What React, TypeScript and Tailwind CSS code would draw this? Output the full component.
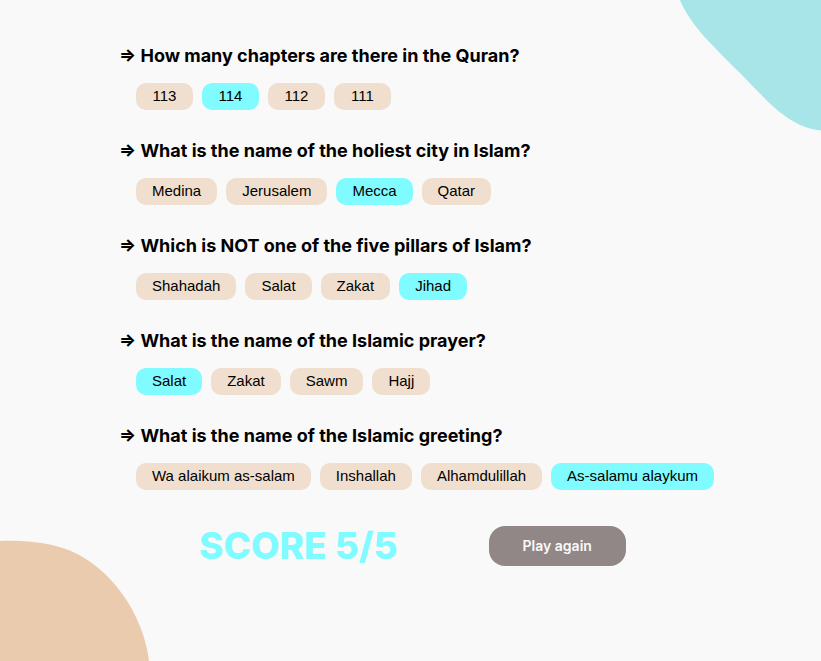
const questions = [
  { id: 'chapters', text: 'How many chapters are there in the Quran?', options: ['113', '114', '112', '111'], answer: '114' },
  { id: 'city', text: 'What is the name of the holiest city in Islam?', options: ['Medina', 'Jerusalem', 'Mecca', 'Qatar'], answer: 'Mecca' },
  { id: 'pillars', text: 'Which is NOT one of the five pillars of Islam?', options: ['Shahadah', 'Salat', 'Zakat', 'Jihad'], answer: 'Jihad' },
  { id: 'prayer', text: 'What is the name of the Islamic prayer?', options: ['Salat', 'Zakat', 'Sawm', 'Hajj'], answer: 'Salat' },
  { id: 'greeting', text: 'What is the name of the Islamic greeting?', options: ['Wa alaikum as-salam', 'Inshallah', 'Alhamdulillah', 'As-salamu alaykum'], answer: 'As-salamu alaykum' },
];

export default function App() {
  return (
    <div className="relative min-h-screen overflow-hidden bg-[#f9f9f9] text-black">
      <svg className="absolute right-0 top-0" width="142" height="131" viewBox="0 0 142 131" aria-hidden="true">
        <path d="M1 0C11 25 35 47 61 73C86 98 108 127 142 130.5V0Z" fill="#a8e5e8" />
      </svg>
      <svg className="absolute bottom-0 left-0" width="150" height="121" viewBox="0 0 150 121" aria-hidden="true">
        <path d="M0 1C35 0 62 4 86 19C119 40 144 80 149 121H0Z" fill="#ebcbae" />
      </svg>
      <main className="relative px-[119px] pt-11">
        <div className="flex flex-col gap-[29px]">
          {questions.map((q) => (
            <section key={q.id} aria-labelledby={q.id}>
              <h2 id={q.id} className="font-['Inter',sans-serif] text-[18px] font-bold leading-6">
                ⇒ {q.text}
              </h2>
              <div className="mt-[15px] flex gap-[9px] pl-[17px]">
                {q.options.map((o) => (
                  <button
                    key={o}
                    type="button"
                    aria-pressed={o === q.answer}
                    className={`h-[27px] min-w-[57px] shrink-0 whitespace-nowrap rounded-[10px] px-4 pb-0.5 font-['Liberation_Sans',Arial,sans-serif] text-[15px] leading-[17px] ${o === q.answer ? 'bg-[#80fbff]' : 'bg-[#f0dfce]'}`}
                  >
                    {o}
                  </button>
                ))}
              </div>
            </section>
          ))}
        </div>
        <div className="mt-9 flex items-center gap-[91px] pl-20 font-['Inter',sans-serif]">
          <p className="text-[37px] font-extrabold leading-10 text-[#80fbff]">SCORE 5/5</p>
          <button type="button" className="h-10 w-[137px] rounded-[16px] bg-[#918787] pb-0.5 text-[14px] font-semibold text-[#f9f9f9]">
            Play again
          </button>
        </div>
      </main>
    </div>
  );
}
